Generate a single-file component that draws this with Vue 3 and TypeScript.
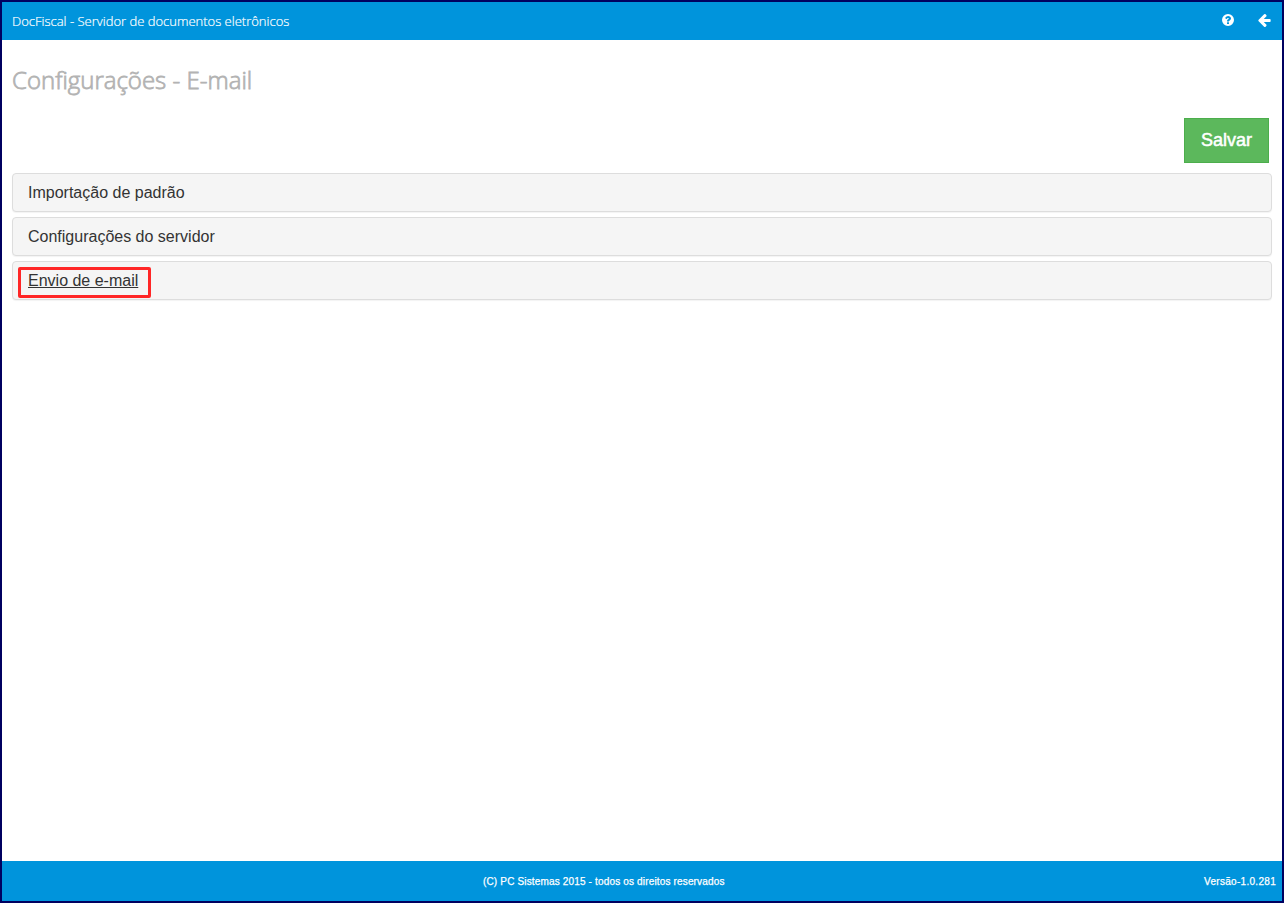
<script setup lang="ts">
interface Panel {
  title: string
  active?: boolean
}

const panels: Panel[] = [
  { title: 'Importação de padrão' },
  { title: 'Configurações do servidor' },
  { title: 'Envio de e-mail', active: true },
]
</script>

<template>
  <div class="page">
    <header class="topbar">
      <span class="brand">DocFiscal - Servidor de documentos eletrônicos</span>
      <nav class="actions">
        <svg class="help" viewBox="0 0 1536 1536" aria-label="Ajuda">
          <path fill="#fff" fill-rule="evenodd" d="M768 0a768 768 0 1 1 0 1536a768 768 0 0 1 0-1536zM672 1056h192q32 0 32 32v160q0 32-32 32h-192q-32 0-32-32v-160q0-32 32-32zM416 528q-20-22 0-44Q544 256 788 256c180 0 364 140 364 320c0 206-256 246-256 348q0 36-32 36h-192q-32 0-32-32v-36c0-202 224-214 224-308c0-56-52-72-100-72c-76 0-104 52-158 116q-22 26-46 8z" />
        </svg>
        <svg class="back" viewBox="0 0 1472 1558" aria-label="Voltar">
          <path fill="#fff" d="M1472 715v128q0 53-32.500 90.500t-84.500 37.500H651l293 294q38 36 38 90t-38 90l-75 76q-37 37-90 37q-52 0-91-37L37 869Q0 832 0 779q0-52 37-91L688 38q38-38 91-38q52 0 90 38l75 74q38 38 38 91t-38 91L651 587h704q52 0 84.500 37.500T1472 715z" />
        </svg>
      </nav>
    </header>

    <main class="content">
      <h1>Configurações - E-mail</h1>
      <div class="toolbar">
        <button class="save" type="button">Salvar</button>
      </div>
      <section class="panels">
        <div v-for="panel in panels" :key="panel.title" class="panel">
          <a class="title" :class="{ active: panel.active }">{{ panel.title }}</a>
          <span v-if="panel.active" class="highlight"></span>
        </div>
      </section>
    </main>

    <footer class="bottombar">
      <span class="copyright">(C) PC Sistemas 2015 - todos os direitos reservados</span>
      <span class="version">Versão-1.0.281</span>
    </footer>
  </div>
</template>

<style>
body {
  margin: 0;
}
</style>

<style scoped>
.page {
  box-sizing: border-box;
  height: 903px;
  border: 2px solid #000060;
  background: #fff;
  display: flex;
  flex-direction: column;
  overflow: hidden;
  font-family: "Liberation Sans", Arial, sans-serif;
}
.topbar {
  height: 38px;
  flex: none;
  display: flex;
  align-items: center;
  justify-content: space-between;
  padding: 0 11px 0 10px;
  background: #0094dc;
  color: #fff;
}
.brand {
  font: 300 13px/18px "Open Sans", sans-serif;
  -webkit-text-stroke: 0.2px #fff;
  white-space: nowrap;
}
.actions {
  display: flex;
  align-items: center;
  gap: 24px;
}
.help {
  width: 12px;
  height: 12px;
  margin-top: -2px;
}
.back {
  width: 13px;
  height: 13px;
  margin-top: -1px;
}
.content {
  flex: 1;
  padding: 0 10px;
}
h1 {
  margin: 22px 0 0;
  height: 36px;
  font: 300 24px/36px "Open Sans", sans-serif;
  color: #b3b3b3;
  -webkit-text-stroke: 0.8px #b3b3b3;
  white-space: nowrap;
}
.toolbar {
  display: flex;
  justify-content: flex-end;
  margin: 20px 3px 10px 0;
}
.save {
  box-sizing: border-box;
  width: 85px;
  height: 45px;
  padding: 0 0 2px;
  border: 1px solid #4cae4c;
  border-radius: 0;
  background: #5cb85c;
  color: #fff;
  font: 18px/24px "Liberation Sans", Arial, sans-serif;
  -webkit-text-stroke: 0.5px #fff;
}
.panels {
  display: flex;
  flex-direction: column;
  gap: 5px;
}
.panel {
  position: relative;
  box-sizing: border-box;
  height: 39px;
  padding: 10px 15px;
  border: 1px solid #ddd;
  border-radius: 4px;
  background: #f5f5f5;
  box-shadow: 0 1px 1px rgba(0, 0, 0, 0.05);
}
.title {
  display: block;
  width: max-content;
  font-size: 16px;
  line-height: 18px;
  color: #333;
}
.active {
  text-decoration: underline;
}
.highlight {
  position: absolute;
  box-sizing: border-box;
  left: 5px;
  top: 5px;
  width: 133px;
  height: 31px;
  border: 3px solid #ff2626;
  border-radius: 2px;
}
.bottombar {
  height: 40px;
  flex: none;
  display: flex;
  align-items: center;
  justify-content: space-between;
  padding: 0 6px 0 481px;
  background: #0094dc;
  color: #fff;
  font-size: 10px;
  letter-spacing: 0.16px;
  -webkit-text-stroke: 0.25px #fff;
  white-space: nowrap;
}
.version {
  letter-spacing: 0.3px;
}
</style>
